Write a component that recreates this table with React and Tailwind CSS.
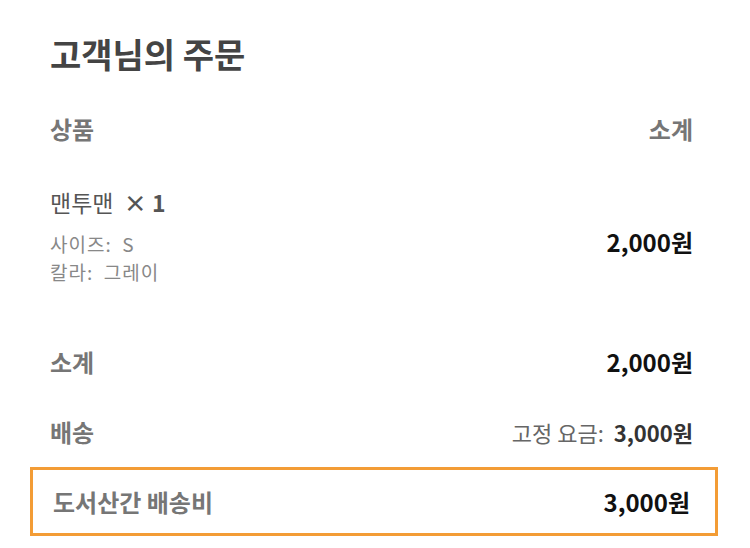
import React from 'react';

const font = { fontFamily: '"Noto Sans CJK KR", "Noto Sans", sans-serif' };

const Row = ({ label, children, className = '' }) => (
  <div className={`flex items-center justify-between pl-[20px] pr-[25px] ${className}`}>
    <span className="text-[24px] font-bold text-[#767676]">{label}</span>
    {children}
  </div>
);

const App = () => {
  return (
    <div className="bg-white w-[750px] h-[548px] pl-[30px] pr-[32px] pt-[30px]" style={font}>
      <h2 className="pl-[20px] h-[48px] leading-[48px] text-[34px] font-bold text-[#444]">고객님의 주문</h2>

      <Row label="상품" className="h-[68px] mt-[17px]">
        <span className="text-[24px] font-bold text-[#767676]">소계</span>
      </Row>

      <div className="flex justify-between pl-[20px] pr-[25px] pt-[22px] pb-[40px]">
        <div>
          <div className="text-[23px] leading-[34px] text-[#555]">
            맨투맨&nbsp; <strong className="font-semibold">×&nbsp;1</strong>
          </div>
          <div className="mt-[11px] text-[19px] leading-[28px] tracking-[1px] text-[#888]">
            <div>사이즈:&nbsp; S</div>
            <div>칼라:&nbsp; 그레이</div>
          </div>
        </div>
        <div className="self-center mt-[12px] text-[24px] font-bold text-[#111]">2,000원</div>
      </div>

      <Row label="소계" className="h-[71px]">
        <span className="text-[24px] font-bold text-[#111]">2,000원</span>
      </Row>

      <Row label="배송" className="h-[70px]">
        <span className="text-[22px] text-[#666]">
          고정 요금:&nbsp; <strong className="font-bold text-[#333]">3,000원</strong>
        </span>
      </Row>

      <Row label="도서산간 배송비" className="h-[69px] border-[3px] border-[#f39c35] pl-[17px] pr-[22px]">
        <span className="text-[24px] font-bold text-[#111]">3,000원</span>
      </Row>
    </div>
  );
};

export default App;
